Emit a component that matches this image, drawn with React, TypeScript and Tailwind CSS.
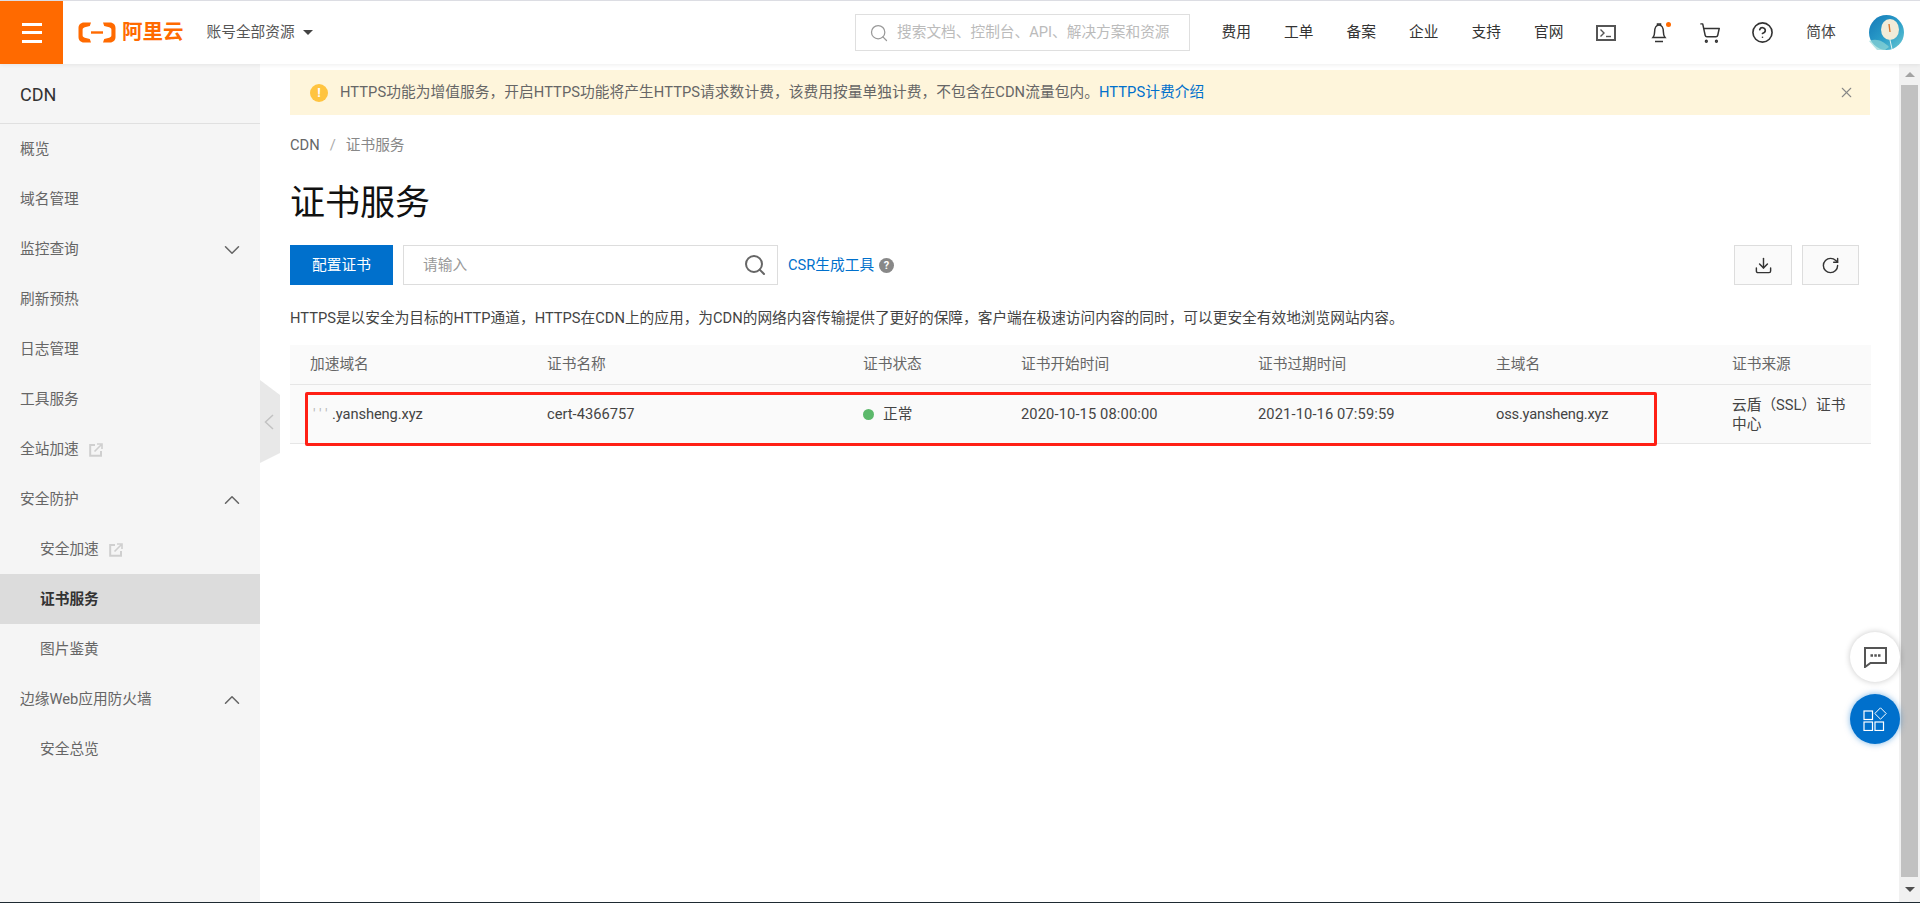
import { ChevronDown, ChevronUp, CircleHelp, Download, RotateCw, Search, ShoppingCart, X } from "lucide-react";

const navLinks = ["费用", "工单", "备案", "企业", "支持", "官网"];

const menu = [
  { label: "概览" },
  { label: "域名管理" },
  { label: "监控查询", arrow: "down" },
  { label: "刷新预热" },
  { label: "日志管理" },
  { label: "工具服务" },
  { label: "全站加速", external: true },
  { label: "安全防护", arrow: "up" },
  { label: "安全加速", sub: true, external: true },
  { label: "证书服务", sub: true, active: true },
  { label: "图片鉴黄", sub: true },
  { label: "边缘Web应用防火墙", arrow: "up" },
  { label: "安全总览", sub: true },
];

const columns = ["加速域名", "证书名称", "证书状态", "证书开始时间", "证书过期时间", "主域名", "证书来源"];

function ExternalIcon() {
  return (
    <svg width="14" height="14" viewBox="0 0 14 14" fill="none" stroke="#cfcfcf" strokeWidth="2" className="ml-[10px]">
      <path d="M6 2H1.2v10.8H12V8" />
      <path d="M5.5 8.5L12 2M8 1h5v5" strokeWidth="1.6" />
    </svg>
  );
}

function Logo() {
  return (
    <div className="ml-[15px] flex shrink-0 items-center gap-[6px]">
      <svg width="38" height="21" viewBox="0 0 38 21" fill="#ff6a00">
        <path d="M13 0.5H6C2.8 0.5 0.5 2.8 0.5 6V15C0.5 18.2 2.8 20.5 6 20.5H13L11.8 17L6.8 15.8C5.4 15.4 4.6 14.6 4.6 13.3V7.7C4.6 6.4 5.4 5.6 6.8 5.2L11.8 4Z" />
        <path d="M25 0.5H32C35.2 0.5 37.5 2.8 37.5 6V15C37.5 18.2 35.2 20.5 32 20.5H25L26.2 17L31.2 15.8C32.6 15.4 33.4 14.6 33.4 13.3V7.7C33.4 6.4 32.6 5.6 31.2 5.2L26.2 4Z" />
        <rect x="13" y="9.3" width="12" height="2.4" />
      </svg>
      <span className="whitespace-nowrap text-[20.5px] leading-none font-bold text-[#ff6a00]">阿里云</span>
    </div>
  );
}

function Avatar() {
  return (
    <svg width="35" height="35" viewBox="0 0 35 35" className="ml-[15px] shrink-0">
      <defs>
        <linearGradient id="sky" x1="0" y1="0" x2="1" y2="1">
          <stop offset="0" stopColor="#1478b8" />
          <stop offset="0.55" stopColor="#2b9fc9" />
          <stop offset="1" stopColor="#6cc9d2" />
        </linearGradient>
      </defs>
      <circle cx="17.5" cy="17.5" r="17.5" fill="url(#sky)" />
      <ellipse cx="21" cy="14.5" rx="9" ry="10.5" fill="#f1ecd8" />
      <path d="M20 9l1 8" stroke="#d9772f" strokeWidth="1.4" />
      <path d="M21 25l2 9" stroke="#e8f4f2" strokeWidth="1" />
      <path d="M0 26c8-3 14 0 20 6l-4 3H8z" fill="#8fd6d6" opacity="0.7" />
    </svg>
  );
}

function TopBar() {
  return (
    <header className="relative z-20 flex h-[64px] shrink-0 items-center border-t border-[#dcdde3] bg-white pr-[16px] shadow-[0_1px_4px_rgba(0,0,0,0.07)]">
      <div className="flex h-full w-[63px] shrink-0 flex-col items-center justify-center gap-[5.5px] bg-[#ff6a00]">
        <span className="h-[3px] w-[20px] bg-white" />
        <span className="h-[3px] w-[20px] bg-white" />
        <span className="h-[3px] w-[20px] bg-white" />
      </div>
      <Logo />
      <div className="ml-[23px] flex shrink-0 items-center gap-[8px] text-[#555]">
        <span className="whitespace-nowrap">账号全部资源</span>
        <span className="h-0 w-0 border-x-[5px] border-t-[5px] border-x-transparent border-t-[#444]" />
      </div>

      <div className="ml-auto flex h-[37px] w-[335px] shrink-0 items-center gap-[8px] border border-[#dfdfdf] pl-[13px]">
        <Search size={20} strokeWidth={1.5} className="text-[#999]" />
        <span className="whitespace-nowrap text-[#bbb]">搜索文档、控制台、API、解决方案和资源</span>
      </div>

      <nav className="ml-[15px] flex shrink-0 items-center text-[#333]">
        {navLinks.map((link) => (
          <span key={link} className="w-[62.5px] text-center">
            {link}
          </span>
        ))}
        <span className="flex w-[52px] justify-center">
          <svg width="20" height="16" viewBox="0 0 20 16" fill="none" stroke="#555" strokeWidth="2">
            <rect x="1" y="1" width="18" height="14" />
            <path d="M4.5 4.5L8 8l-3.5 3.5" strokeWidth="1.4" />
            <path d="M10 11.5h5" strokeWidth="1.4" />
          </svg>
        </span>
        <span className="relative flex w-[52px] justify-center pl-[2px]">
          <svg width="16" height="20" viewBox="0 0 16 20" fill="none" stroke="#333" strokeWidth="1.5">
            <path d="M2 14.5c1.3-1.5 1.6-3 1.6-5.5C3.6 5 5.4 2 8 2s4.400 3 4.400 7c0 2.500.3 4 1.600 5.500z" />
            <path d="M6.500 2V1h3v1M4 18.500h8" />
          </svg>
          <span className="absolute -top-[1px] left-[34px] h-[5px] w-[5px] rounded-full bg-[#ff6a00]" />
        </span>
        <span className="flex w-[52px] justify-center">
          <ShoppingCart size={22} strokeWidth={1.6} className="text-[#333]" />
        </span>
        <span className="flex w-[52px] justify-center">
          <CircleHelp size={23} strokeWidth={1.7} className="text-[#333]" />
        </span>
        <span className="w-[66px] text-center text-[#444]">简体</span>
      </nav>
      <Avatar />
    </header>
  );
}

function Sidebar() {
  return (
    <aside className="w-[260px] shrink-0 bg-[#f5f5f5]">
      <div className="flex h-[60px] items-center border-b border-[#e0e0e0] pl-[20px] pt-[2px] text-[18px] text-[#333]">CDN</div>
      {menu.map((item) => (
        <div
          key={item.label}
          className={`flex h-[50px] items-center pr-[18px] pt-[1px] ${item.sub ? "pl-[40px]" : "pl-[20px]"} ${
            item.active ? "bg-[#dcdcdc] font-bold text-[#333]" : "text-[#666]"
          }`}
        >
          <span>{item.label}</span>
          {item.external && <ExternalIcon />}
          {item.arrow === "down" && <ChevronDown size={26} strokeWidth={1.4} className="ml-auto -mr-[3px] text-[#666]" />}
          {item.arrow === "up" && <ChevronUp size={26} strokeWidth={1.4} className="ml-auto -mr-[3px] text-[#666]" />}
        </div>
      ))}
    </aside>
  );
}

function CertTable() {
  return (
    <div className="relative mt-[16px] text-[#555]">
      <table className="w-full table-fixed border-collapse">
        <colgroup>
          <col className="w-[237px]" />
          <col className="w-[316px]" />
          <col className="w-[158px]" />
          <col className="w-[237px]" />
          <col className="w-[238px]" />
          <col className="w-[236px]" />
          <col className="w-[159px]" />
        </colgroup>
        <thead>
          <tr className="h-[39px] border-b border-[#e6e6e6] bg-[#fafafa]">
            {columns.map((col) => (
              <th key={col} className="pl-[20px] text-left font-normal text-[#666]">
                {col}
              </th>
            ))}
          </tr>
        </thead>
        <tbody>
          <tr className="h-[59px] border-b border-[#e6e6e6] bg-[#fafafa] leading-[19px] text-[#444] [&>td]:pt-[2px]">
            <td className="pl-[20px] tracking-[-0.1px]">
              <span className="inline-block w-[22px] pl-[3px] text-[#bbb]">' ' '</span>.yansheng.xyz
            </td>
            <td className="pl-[20px]">cert-4366757</td>
            <td className="pl-[20px]">
              <span className="inline-flex items-center gap-[9px]">
                <span className="h-[11px] w-[11px] rounded-full bg-[#5cb96b]" />
                正常
              </span>
            </td>
            <td className="pl-[20px] tracking-[0.12px]">2020-10-15 08:00:00</td>
            <td className="pl-[20px] tracking-[0.12px]">2021-10-16 07:59:59</td>
            <td className="pl-[20px] tracking-[-0.2px]">oss.yansheng.xyz</td>
            <td className="pl-[20px] pr-[20px]">云盾（SSL）证书中心</td>
          </tr>
        </tbody>
      </table>
      {/* red annotation drawn over the row */}
      <div className="absolute left-[15px] top-[47px] h-[54px] w-[1352px] rounded-[2px] border-[3px] border-[#ff2015]" />
    </div>
  );
}

function Content() {
  return (
    <main className="relative min-w-0 flex-1 pl-[30px] pr-[28px] pt-[6px]">
      <div className="mr-[1px] flex h-[45px] items-center bg-[#fef5db] pl-[20px] pr-[15px] text-[#666]">
        <span className="flex h-[18px] w-[18px] shrink-0 items-center justify-center rounded-full bg-[#ffc440] text-[13px] font-bold leading-none text-white">
          !
        </span>
        <span className="ml-[12px] whitespace-nowrap tracking-[0.07px]">
          HTTPS功能为增值服务，开启HTTPS功能将产生HTTPS请求数计费，该费用按量单独计费，不包含在CDN流量包内。
          <span className="text-[#0070cc]">HTTPS计费介绍</span>
        </span>
        <X size={17} strokeWidth={1.5} className="ml-auto text-[#888]" />
      </div>

      <div className="mt-[20px] flex h-[20px] items-center text-[#666]">
        <span>CDN</span>
        <span className="mx-[10px] text-[#aaa]">/</span>
        <span className="text-[#888]">证书服务</span>
      </div>

      <h1 className="mt-[24px] h-[50px] text-[35px] font-normal leading-[50px] text-[#111]">证书服务</h1>

      <div className="mt-[16px] flex h-[40px] items-center">
        <button className="h-full w-[103px] bg-[#0070cc] text-white">配置证书</button>
        <div className="ml-[10px] flex h-full w-[375px] items-center justify-between border border-[#ddd] pl-[19px] pr-[10px]">
          <span className="text-[#999]">请输入</span>
          <Search size={24} strokeWidth={2} className="text-[#666]" />
        </div>
        <span className="ml-[10px] text-[#0070cc]">CSR生成工具</span>
        <span className="ml-[5px] flex h-[15px] w-[15px] items-center justify-center rounded-full bg-[#888] text-[11px] font-bold leading-none text-white">
          ?
        </span>
        <div className="ml-auto mr-[12px] flex gap-[10px]">
          <button className="flex h-[40px] w-[58px] items-center justify-center border border-[#ddd] bg-[#fafafa]">
            <Download size={19} strokeWidth={1.8} className="text-[#333]" />
          </button>
          <button className="flex h-[40px] w-[57px] items-center justify-center border border-[#ddd] bg-[#fafafa]">
            <RotateCw size={19} strokeWidth={1.8} className="text-[#333]" />
          </button>
        </div>
      </div>

      <p className="mt-[22px] h-[22px] whitespace-nowrap leading-[22px] text-[#444]">
        HTTPS是以安全为目标的HTTP通道，HTTPS在CDN上的应用，为CDN的网络内容传输提供了更好的保障，客户端在极速访问内容的同时，可以更安全有效地浏览网站内容。
      </p>

      <CertTable />
    </main>
  );
}

function Scrollbar() {
  return (
    <div className="flex w-[21px] shrink-0 flex-col bg-[#f1f1f1] px-[2px]">
      <div className="flex h-[21px] items-center justify-center">
        <span className="h-0 w-0 border-x-[5px] border-b-[5px] border-x-transparent border-b-[#a3a3a3]" />
      </div>
      <div className="flex-1 bg-[#c1c1c1]" />
      <div className="flex h-[25px] items-center justify-center">
        <span className="h-0 w-0 border-x-[5px] border-t-[5px] border-x-transparent border-t-[#505050]" />
      </div>
    </div>
  );
}

export default function App() {
  return (
    <div className="relative flex h-[903px] w-[1920px] flex-col overflow-hidden bg-white text-[14.7px] [font-family:Roboto,'Noto_Sans_CJK_SC',sans-serif]">
      <TopBar />
      <div className="flex min-h-0 flex-1">
        <Sidebar />
        <Content />
        <Scrollbar />
      </div>
      <div className="h-px shrink-0 bg-[#1e2a32]" />

      {/* sidebar collapse tab */}
      <div className="absolute left-[260px] top-[380px] flex h-[83px] w-[20px] items-center bg-[#e8e8e8] pl-[4px] [clip-path:polygon(0_0,100%_18%,100%_88%,0_100%)]">
        <svg width="10" height="16" viewBox="0 0 10 16" fill="none" stroke="#c2c2c2" strokeWidth="1.5">
          <path d="M9 1L1.500 8 9 15" />
        </svg>
      </div>

      {/* floating buttons */}
      <div className="absolute left-[1850px] top-[632px] flex flex-col gap-[12px]">
        <div className="flex h-[50px] w-[50px] items-center justify-center rounded-full bg-white shadow-[0_0_6px_rgba(0,0,0,0.22)]">
          <svg width="23" height="21" viewBox="0 0 23 21" fill="none" stroke="#555" strokeWidth="2">
            <path d="M1 1h21v15H6.500L1 20z" />
            <path d="M6.500 8.500h2.500M10.300 8.500h2.500M14 8.500h2.500" strokeWidth="2.400" />
          </svg>
        </div>
        <div className="flex h-[50px] w-[50px] items-center justify-center rounded-full bg-[#0070cc] shadow-[0_0_6px_rgba(0,112,204,0.5)]">
          <svg width="24" height="24" viewBox="0 0 24 24" fill="none" stroke="#fff" strokeWidth="1.200">
            <rect x="1" y="4" width="8.500" height="8.500" />
            <rect x="1" y="15" width="8.500" height="8.500" />
            <rect x="12" y="15" width="8.500" height="8.500" />
            <path d="M17.500 0.800L23.200 6.500 17.500 12.200 11.800 6.500z" strokeWidth="1" />
          </svg>
        </div>
      </div>
    </div>
  );
}
